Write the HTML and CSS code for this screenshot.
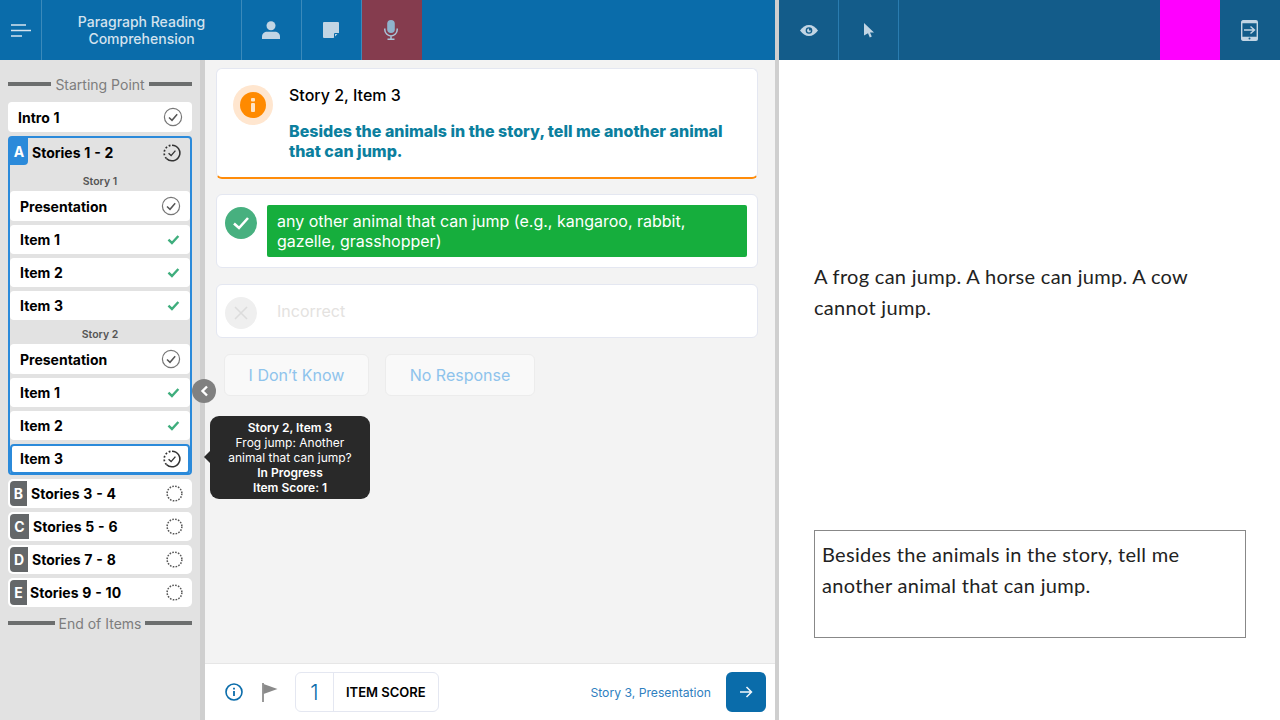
FILE: index.html
```html
<!DOCTYPE html>
<html lang="en">
  <head>
    <meta charset="UTF-8" />
    <title>Paragraph Reading Comprehension</title>
    <link rel="stylesheet" href="styles.css">
  </head>
  <body>
    <svg class="defs" width="0" height="0">
      <symbol id="done" viewBox="0 0 20 20">
        <circle cx="10" cy="10" r="8.600" fill="none" stroke="#777" stroke-width="1.200" />
        <path d="M6 10.500l3 2.800 5.200-6" fill="none" stroke="#555" stroke-width="1.500" />
      </symbol>
      <symbol id="progress" viewBox="0 0 20 20">
        <path d="M10 1.300a8.700 8.700 0 1 1-6.200 14.800" fill="none" stroke="#333" stroke-width="1.700" />
        <path d="M3.800 16.100A8.700 8.700 0 0 1 10 1.300" fill="none" stroke="#333" stroke-width="1.900" stroke-dasharray="2 2.100" />
        <path d="M6.200 10.300l2.800 2.600 4.800-5.600" fill="none" stroke="#333" stroke-width="1.500" />
      </symbol>
      <symbol id="todo" viewBox="0 0 18 18">
        <circle cx="9" cy="9" r="7.800" fill="none" stroke="#555" stroke-width="1.600" stroke-dasharray="1.700 1.400" />
      </symbol>
      <symbol id="tick" viewBox="0 0 14 12">
        <path d="M1.500 6.200l3.800 3.600 7-7.600" fill="none" stroke="#3fae7d" stroke-width="2.600" />
      </symbol>
    </svg>

    <div class="left">
      <header class="bar">
        <div class="cell menu">
          <svg width="20" height="13" viewBox="0 0 20 13"><path d="M0 1h15M0 6.500h20M0 12h11" stroke="#d5e4ef" stroke-width="1.700" /></svg>
        </div>
        <div class="cell title">Paragraph Reading<br />Comprehension</div>
        <div class="cell tool">
          <svg width="18" height="18" viewBox="0 0 18 18" fill="#c2d5e4"><circle cx="9" cy="4.800" r="4.500" /><path d="M0 18v-2.500c0-3 2.500-4.700 5-4.700h8c2.500 0 5 1.700 5 4.700V18z" /></svg>
        </div>
        <div class="cell tool">
          <svg width="16" height="16" viewBox="0 0 16 16" fill="#c2d5e4"><path d="M1 0h14a1 1 0 0 1 1 1v9.500l-5.500 5.500H1a1 1 0 0 1-1-1V1a1 1 0 0 1 1-1z" /><path d="M11.500 15.500v-4h4" fill="none" stroke="#0a6caa" stroke-width="1" /></svg>
        </div>
        <div class="cell tool mic">
          <svg width="14" height="20" viewBox="0 0 14 20" fill="none"><rect x="3.200" y="0" width="7.600" height="13" rx="3.800" fill="#8fb3cd" /><path d="M.8 8.500v1.200a6.200 6.200 0 0 0 12.400 0V8.500M7 16v3.300M3.500 19.300h7" stroke="#a9c3d8" stroke-width="1.500" /></svg>
        </div>
      </header>

      <div class="work">
        <aside class="side">
          <div class="rule first"><span>Starting Point</span></div>
          <div class="row top">
            <b class="name">Intro 1</b>
            <svg class="ico"><use href="#done" /></svg>
          </div>

          <div class="group">
            <div class="group-head">
              <span class="badge active">A</span>
              <b class="name">Stories 1 - 2</b>
              <svg class="prog"><use href="#progress" /></svg>
            </div>
            <div class="story first-story">Story 1</div>
            <div class="row tall"><b class="name">Presentation</b><svg class="ico"><use href="#done" /></svg></div>
            <div class="row"><b class="name">Item 1</b><svg class="tick"><use href="#tick" /></svg></div>
            <div class="row"><b class="name">Item 2</b><svg class="tick"><use href="#tick" /></svg></div>
            <div class="row"><b class="name">Item 3</b><svg class="tick"><use href="#tick" /></svg></div>
            <div class="story">Story 2</div>
            <div class="row tall"><b class="name">Presentation</b><svg class="ico"><use href="#done" /></svg></div>
            <div class="row"><b class="name">Item 1</b><svg class="tick"><use href="#tick" /></svg></div>
            <div class="row"><b class="name">Item 2</b><svg class="tick"><use href="#tick" /></svg></div>
            <div class="row current"><b class="name">Item 3</b><svg class="prog"><use href="#progress" /></svg></div>
          </div>

          <div class="row section"><span class="badge b-b">B</span><b class="name">Stories 3 - 4</b><svg class="dash"><use href="#todo" /></svg></div>
          <div class="row section"><span class="badge b-c">C</span><b class="name">Stories 5 - 6</b><svg class="dash"><use href="#todo" /></svg></div>
          <div class="row section"><span class="badge b-d">D</span><b class="name">Stories 7 - 8</b><svg class="dash"><use href="#todo" /></svg></div>
          <div class="row section"><span class="badge b-e">E</span><b class="name">Stories 9 - 10</b><svg class="dash"><use href="#todo" /></svg></div>
          <div class="rule last"><span>End of Items</span></div>
        </aside>

        <div class="collapse">
          <svg width="9" height="12" viewBox="0 0 9 12"><path d="M7 1.500L2.500 6 7 10.500" fill="none" stroke="#fff" stroke-width="2.400" /></svg>
        </div>

        <div class="tooltip">
          <b>Story 2, Item 3</b><br />
          Frog jump: Another<br />
          animal that can jump?<br />
          <b>In Progress</b><br />
          <b>Item Score: 1</b>
        </div>

        <main class="main">
          <div class="scroll">
            <section class="card prompt">
              <div class="info-ring"><div class="info-dot">
                <svg width="6" height="14" viewBox="0 0 6 14" fill="#ffe3c4"><rect x="1" y="0" width="4" height="3.400" rx="1" /><rect x="1" y="5" width="4" height="9" rx="1" /></svg>
              </div></div>
              <div class="prompt-text">
                <h2>Story 2, Item 3</h2>
                <p>Besides the animals in the story, tell me another animal that can jump.</p>
              </div>
            </section>

            <section class="card answer">
              <div class="round ok">
                <svg width="18" height="14" viewBox="0 0 18 14"><path d="M2 7.500l5 4.500 9-10" fill="none" stroke="#fff" stroke-width="2.600" /></svg>
              </div>
              <div class="answer-text">any other animal that can jump (e.g., kangaroo, rabbit, gazelle, grasshopper)</div>
            </section>

            <section class="card wrong">
              <div class="round no">
                <svg width="14" height="14" viewBox="0 0 14 14"><path d="M1 1l12 12M13 1L1 13" stroke="#dcdcdc" stroke-width="1.600" /></svg>
              </div>
              <div class="wrong-text">Incorrect</div>
            </section>

            <div class="btns">
              <div class="btn dk">I Don’t Know</div>
              <div class="btn nr">No Response</div>
            </div>
          </div>

          <footer class="foot">
            <svg class="foot-info" width="18" height="18" viewBox="0 0 18 18" fill="none"><circle cx="9" cy="9" r="8" stroke="#0a6caa" stroke-width="1.600" /><path d="M9 8v5M9 4.800v1.600" stroke="#0a6caa" stroke-width="1.800" /></svg>
            <svg class="foot-flag" width="16" height="19" viewBox="0 0 16 19"><path d="M1 0v19" stroke="#777" stroke-width="1.500" /><path d="M1.500 1l14 5-14 5z" fill="#8a8a8a" /></svg>
            <div class="score"><span class="num">1</span><b>ITEM SCORE</b></div>
            <span class="next-label">Story 3, Presentation</span>
            <div class="next">
              <svg width="14" height="12" viewBox="0 0 14 12"><path d="M1 6h11.500M7.500 1l5 5-5 5" fill="none" stroke="#f2f7fb" stroke-width="1.500" /></svg>
            </div>
          </footer>
        </main>
      </div>
    </div>

    <div class="split"></div>

    <div class="right">
      <header class="bar dark">
        <div class="cell tool line">
          <svg width="18" height="11" viewBox="0 0 18 11"><path d="M0 5.500C2.500 2 5.500 0 9 0s6.500 2 9 5.500C15.500 9 12.500 11 9 11S2.500 9 0 5.500z" fill="#c2d5e4" /><circle cx="9" cy="5.500" r="3.300" fill="#135c8a" /><path d="M9 3.500a2 2 0 1 0 2 2H9z" fill="#c2d5e4" /></svg>
        </div>
        <div class="cell tool line">
          <svg width="10" height="15" viewBox="0 0 10 15"><path d="M0 0l10 9.500H6l1.800 4-2 1-1.800-4.200L0 12.500z" fill="#c2d5e4" /></svg>
        </div>
        <div class="spacer"></div>
        <div class="pink"></div>
        <div class="cell tool last-tool">
          <svg width="17" height="21" viewBox="0 0 17 21"><rect x=".7" y=".7" width="15.600" height="19.600" rx="1.500" fill="none" stroke="#c2d5e4" stroke-width="1.400" /><path d="M.7 3.200h15.600V1.500L15.500.7h-14L.7 1.500zM.7 16.800h15.600v3.500H.7z" fill="#c2d5e4" /><path d="M3 10h10.500M9.500 6.500l4 3.500-4 3.500" fill="none" stroke="#c2d5e4" stroke-width="1.400" /><circle cx="8.500" cy="18.500" r="1" fill="#135c8a" /></svg>
        </div>
      </header>
      <div class="reading">
        <p class="passage">A frog can jump. A horse can jump. A cow cannot jump.</p>
        <p class="question">Besides the animals in the story, tell me another animal that can jump.</p>
      </div>
    </div>
  </body>
</html>
```

FILE: styles.css
```css
* {
  box-sizing: border-box;
}

html,
body {
  margin: 0;
  height: 720px;
  overflow: hidden;
}

body {
  display: flex;
  font-family: Inter, "Liberation Sans", sans-serif;
  color: #000;
  background-color: #fff;
}

.defs {
  position: absolute;
}

.left {
  width: 775px;
  display: flex;
  flex-direction: column;
}

.split {
  width: 4px;
  background-color: #cfcfcf;
}

.right {
  width: 501px;
  display: flex;
  flex-direction: column;
}

/* top bars */
.bar {
  height: 60px;
  display: flex;
  background-color: #0a6caa;
  flex-shrink: 0;
}

.bar.dark {
  background-color: #135c8a;
}

.cell {
  display: flex;
  align-items: center;
  justify-content: center;
  border-right: 1px solid #3b8abb;
}

.menu {
  width: 42px;
}

.title {
  width: 200px;
  color: #d3e2ee;
  font-size: 14px;
  font-weight: 500;
  line-height: 17px;
  text-align: center;
}

.tool {
  width: 60px;
  padding-right: 1px;
}

.mic {
  background-color: #853c4e;
  border-right: 0;
  padding-right: 2px;
}

.line {
  border-right-color: #2a7cb0;
  padding-right: 0;
}

.spacer {
  flex: 1;
}

.pink {
  width: 60px;
  background-color: #ff00ff;
}

.last-tool {
  border-right: 0;
}

.work {
  flex: 1;
  display: flex;
  position: relative;
}

/* sidebar */
.side {
  width: 205px;
  padding: 0 8px;
  background-color: #e2e2e2;
  border-right: 5px solid #cfcfcf;
  flex-shrink: 0;
}

.rule {
  display: flex;
  align-items: center;
  gap: 4px;
  height: 18px;
  color: #7d7d7d;
  font-size: 14px;
}

.rule::before,
.rule::after {
  content: "";
  flex: 1;
  height: 4px;
  background-color: #6c6e6e;
}

.rule.first {
  margin: 15px 0 9px;
}

.rule.last {
  margin-top: 7px;
}

.row {
  height: 29px;
  display: flex;
  align-items: center;
  margin-bottom: 4px;
  padding: 0 10px;
  background-color: #fff;
  border-radius: 4px;
}

.row.top,
.row.tall {
  height: 30px;
}

.name {
  flex: 1;
  font-size: 14px;
  font-weight: 700;
  word-spacing: 0.5px;
  white-space: nowrap;
}

.ico {
  width: 20px;
  height: 20px;
  margin-right: -1px;
}

.prog {
  width: 18px;
  height: 18px;
}

.tick {
  width: 13px;
  height: 11px;
}

.dash {
  width: 17px;
  height: 17px;
  margin-right: -1px;
}

.group {
  height: 339px;
  margin-bottom: 4px;
  border: 2px solid #2b8ada;
  border-radius: 4px;
}

.group-head {
  height: 29px;
  display: flex;
  align-items: center;
  padding-right: 9px;
}

.group-head .name {
  margin-left: 4px;
}

.badge {
  width: 18px;
  height: 100%;
  display: flex;
  align-items: center;
  justify-content: center;
  flex-shrink: 0;
  color: #fff;
  font-size: 14px;
  font-weight: 700;
  background-color: #646769;
  border-radius: 4px 0 0 4px;
}

.badge.active {
  height: 27px;
  align-self: flex-start;
  background-color: #2b8ada;
  border-radius: 0 0 4px 0;
}

.story {
  height: 20px;
  padding-top: 4px;
  font-size: 10.500px;
  line-height: 13px;
  font-weight: 600;
  color: #555;
  text-align: center;
}

.story.first-story {
  height: 24px;
  padding-top: 8px;
}

.group .row:last-child {
  height: 30px;
  margin-bottom: 0;
  padding-bottom: 1px;
}

.current {
  border: 2px solid #2b8ada;
  margin: 0;
  padding: 0 7px 0 8px;
}

.section {
  padding: 0 10px 0 2px;
  border-radius: 5px;
}

.section .badge {
  height: 25px;
  margin-right: 4px;
}

.b-b {
  width: 17px;
}

.b-c {
  width: 19px;
}

.b-d {
  width: 18px;
}

.section .b-e {
  width: 17px;
  margin-right: 3px;
}

/* floating bits */
.collapse {
  position: absolute;
  left: 192px;
  top: 319px;
  width: 24px;
  height: 24px;
  display: flex;
  align-items: center;
  justify-content: center;
  background-color: #808080;
  border-radius: 50%;
  z-index: 2;
}

.tooltip {
  position: absolute;
  left: 210px;
  top: 356px;
  width: 160px;
  height: 83px;
  padding-top: 4px;
  color: #fff;
  font-size: 12px;
  line-height: 15px;
  text-align: center;
  background-color: #292929;
  border-radius: 9px;
  z-index: 2;
}

.tooltip b {
  font-weight: 600;
}

.tooltip::before {
  content: "";
  position: absolute;
  left: -6px;
  top: 35px;
  border-top: 6px solid transparent;
  border-bottom: 6px solid transparent;
  border-right: 6px solid #292929;
}

/* main column */
.main {
  flex: 1;
  display: flex;
  flex-direction: column;
  background-color: #f3f3f3;
}

.scroll {
  flex: 1;
  padding: 8px 17px 0 11px;
}

.card {
  display: flex;
  background-color: #fff;
  border: 1px solid #e4e7f1;
  border-radius: 6px;
}

.prompt {
  height: 111px;
  padding: 16px 0 0 16px;
  border-bottom: 2px solid #ff8c0a;
  margin-bottom: 15px;
}

.info-ring {
  width: 40px;
  height: 40px;
  display: flex;
  align-items: center;
  justify-content: center;
  background-color: #ffe6cf;
  border-radius: 50%;
  flex-shrink: 0;
}

.info-dot {
  width: 26px;
  height: 26px;
  display: flex;
  align-items: center;
  justify-content: center;
  background-color: #ff8a00;
  border-radius: 50%;
}

.prompt-text {
  margin-left: 16px;
  width: 450px;
}

.prompt-text h2 {
  margin: 0 0 16px;
  font-size: 16px;
  line-height: 20px;
  font-weight: 500;
}

.prompt-text p {
  margin: 0;
  font-size: 16px;
  line-height: 20px;
  font-weight: 800;
  color: #0c7f9e;
}

.answer {
  height: 74px;
  padding: 10px 10px 10px 8px;
  margin-bottom: 16px;
}

.round {
  width: 32px;
  height: 32px;
  display: flex;
  align-items: center;
  justify-content: center;
  border-radius: 50%;
  flex-shrink: 0;
  margin-top: 2px;
}

.ok {
  background-color: #47b07f;
}

.no {
  background-color: #efefef;
}

.answer-text {
  flex: 1;
  margin-left: 10px;
  padding: 6px 10px;
  color: #fff;
  font-size: 16px;
  line-height: 20px;
  background-color: #16ae3d;
  border-radius: 2px;
}

.wrong {
  height: 54px;
  padding: 10px 10px 10px 8px;
  margin-bottom: 16px;
}

.wrong-text {
  margin: 6px 0 0 20px;
  color: #e4e2e0;
  font-size: 16px;
  line-height: 20px;
}

.btns {
  display: flex;
  gap: 16px;
  padding-left: 8px;
}

.btn {
  height: 42px;
  display: flex;
  align-items: center;
  justify-content: center;
  color: #8ec3ec;
  font-size: 16px;
  background-color: #f9f9f9;
  border: 1px solid #ececec;
  border-radius: 6px;
}

.dk {
  width: 145px;
}

.nr {
  width: 150px;
}

.foot {
  height: 57px;
  display: flex;
  align-items: center;
  padding: 0 9px 0 20px;
  background-color: #fff;
  border-top: 1px solid #e6e6e6;
}

.foot-flag {
  margin-left: 19px;
}

.score {
  display: flex;
  align-items: center;
  height: 40px;
  width: 144px;
  margin-left: 17px;
  border: 1px solid #e4e7f1;
  border-radius: 6px;
}

.num {
  width: 38px;
  height: 100%;
  display: flex;
  align-items: center;
  justify-content: center;
  color: #0a6caa;
  font-size: 21px;
  font-weight: 300;
  border-right: 1px solid #e4e7f1;
}

.score b {
  margin-left: 12px;
  font-size: 13px;
  font-weight: 600;
}

.next-label {
  margin-left: auto;
  color: #2f80c0;
  font-size: 12.200px;
}

.next {
  width: 40px;
  height: 40px;
  margin-left: 15px;
  display: flex;
  align-items: center;
  justify-content: center;
  background-color: #0a6caa;
  border-radius: 6px;
}

/* reading pane */
.reading {
  flex: 1;
  padding: 201px 34px 0 35px;
  font-family: Lato, sans-serif;
  font-size: 20px;
  letter-spacing: 0.3px;
  line-height: 31px;
  color: #222;
}

.passage {
  margin: 0 0 211px;
  height: 58px;
}

.question {
  margin: 0;
  height: 108px;
  padding: 8px 7px;
  border: 1px solid #888;
}
```
